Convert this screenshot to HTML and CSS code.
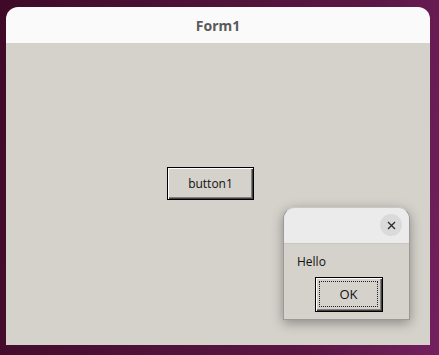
FILE: index.html
```html
<!DOCTYPE html>
<html>
<head>
<meta charset="utf-8">
<link rel="stylesheet" href="styles.css">
</head>
<body>
<div class="desktop">
  <div class="window main">
    <div class="titlebar"><span class="title">Form1</span></div>
    <div class="client">
      <button class="btn button1">button1</button>
    </div>
  </div>
  <div class="window dialog">
    <div class="titlebar dlg-title">
      <span class="close">
        <svg width="9" height="9" viewBox="0 0 9 9"><path d="M1 1L8 8M8 1L1 8" stroke="#2e2e2e" stroke-width="1.4"/></svg>
      </span>
    </div>
    <div class="client dlg-body">
      <div class="msg">Hello</div>
      <button class="btn ok"><span class="focus">OK</span></button>
    </div>
  </div>
</div>
</body>
</html>
```
FILE: styles.css
```css
html, body {
  margin: 0;
  padding: 0;
  width: 439px;
  height: 355px;
  overflow: hidden;
}
.desktop {
  position: relative;
  width: 439px;
  height: 355px;
  background: linear-gradient(100deg, #3f0a28 0%, #4e1237 40%, #5c1745 75%, #73205f 100%);
  font-family: "Open Sans", "Noto Sans", sans-serif;
}
.window {
  position: absolute;
  display: flex;
  flex-direction: column;
  overflow: hidden;
}
.main {
  left: 6px;
  top: 7px;
  width: 424px;
  height: 338px;
  border-radius: 12px 12px 0 0;
}
.titlebar {
  height: 36px;
  flex: none;
  background: #fafafa;
  display: flex;
  align-items: center;
  justify-content: center;
}
.title {
  font-family: "Noto Sans", sans-serif;
  font-weight: 700;
  font-size: 14px;
  color: #5a5a5a;
  margin-top: 1px;
}
.client {
  flex: 1;
  background: #d5d1cb;
  position: relative;
}
.btn {
  box-sizing: border-box;
  margin: 0;
  padding: 0;
  background: #d5d1cb;
  border: 1px solid #000;
  box-shadow: inset 1px 1px 0 #fff, inset -1px -1px 0 #404040, inset -2px -2px 0 #808080;
  font-family: "Open Sans", "Noto Sans", sans-serif;
  font-size: 12px;
  color: #111;
  display: flex;
  align-items: center;
  justify-content: center;
}
.button1 {
  position: absolute;
  left: 161px;
  top: 124px;
  width: 87px;
  height: 33px;
}
.dialog {
  left: 283px;
  top: 207px;
  width: 127px;
  height: 113px;
  border-radius: 12px 12px 0 0;
  border: 1px solid #9a9a9a;
  border-top-color: #c8c8c8;
  box-sizing: border-box;
  box-shadow: 0 3px 12px rgba(0,0,0,0.35);
  overflow: visible;
}
.dlg-title {
  background: #ebebeb;
  border-radius: 11px 11px 0 0;
  justify-content: flex-end;
  padding-right: 7px;
  border-bottom: 1px solid #c9c6c1;
  box-sizing: border-box;
  height: 36px;
}
.close {
  width: 22px;
  height: 22px;
  border-radius: 50%;
  background: #dadada;
  display: flex;
  align-items: center;
  justify-content: center;
  margin-top: -1px;
}
.close svg { display: block; }
.dlg-body {
  display: flex;
  flex-direction: column;
  padding: 10px 0 0 13px;
}
.msg {
  font-size: 12px;
  color: #111;
  line-height: 16px;
}
.ok {
  width: 68px;
  height: 35px;
  margin: 7px 0 0 18px;
  font-size: 13px;
  padding: 3px 4px 4px 3px;
}
.focus {
  box-sizing: border-box;
  width: 100%;
  height: 100%;
  border: 1px dotted #222;
  display: flex;
  align-items: center;
  justify-content: center;
}
```
